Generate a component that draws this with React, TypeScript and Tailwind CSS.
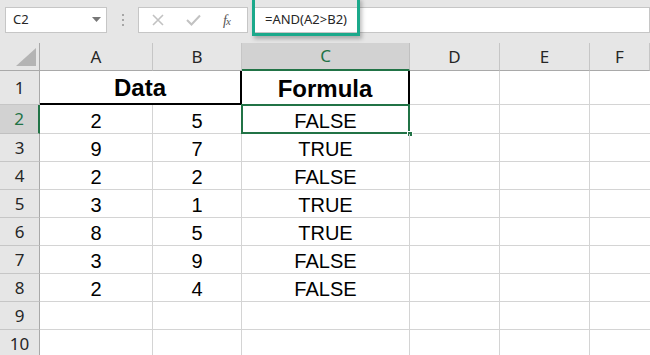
import React from 'react';

const rows = [
  { a: 2, b: 5, c: 'FALSE' },
  { a: 9, b: 7, c: 'TRUE' },
  { a: 2, b: 2, c: 'FALSE' },
  { a: 3, b: 1, c: 'TRUE' },
  { a: 8, b: 5, c: 'TRUE' },
  { a: 3, b: 9, c: 'FALSE' },
  { a: 2, b: 4, c: 'FALSE' },
];

const cols = ['A', 'B', 'C', 'D', 'E', 'F'];

const grid = 'grid grid-cols-[40px_113px_89px_168px_90px_90px_1fr]';
const cell = 'border-r border-b border-[#d4d4d4] flex items-center justify-center text-[20px] text-black pt-[3px]';
const ui = "font-['Noto_Sans',sans-serif]";

const App: React.FC = () => {
  return (
    <div className="w-[650px] h-[355px] overflow-hidden bg-white font-['Liberation_Sans',Arial,sans-serif]">
      <Toolbar />

      <div className={grid}>
        {/* column headers */}
        <div className="h-[28px] bg-[#e6e6e6] border-r border-b border-[#a9a9a9] flex items-end justify-end pr-[3px] pb-[4px]">
          <svg width="20" height="18" viewBox="0 0 20 18"><polygon points="20,0 20,18 0,18" fill="#b4b4b4" /></svg>
        </div>
        {cols.map((c) => (
          <div
            key={c}
            className={`h-[28px] flex items-center justify-center text-[17px] ${ui} border-r ${
              c === 'C'
                ? 'bg-[#d2d2d2] text-[#217346] border-r-[#c0c0c0] border-b-2 border-b-[#217346]'
                : 'bg-[#e6e6e6] text-[#262626] border-r-[#c6c6c6] border-b border-b-[#a9a9a9]'
            }`}
          >
            {c}
          </div>
        ))}

        {/* row 1 */}
        <RowHead n={1} h="h-[34px]" />
        <div className="col-span-2 h-[34px] border-r-2 border-b-2 border-black flex items-center justify-center text-[24px] font-bold pt-[2px]">
          Data
        </div>
        <div className="h-[34px] border-r-2 border-black flex items-center justify-center text-[24px] font-bold pt-[2px]">
          Formula
        </div>
        <div className={`${cell} h-[34px]`} />
        <div className={`${cell} h-[34px]`} />
        <div className={`${cell} h-[34px] border-r-0`} />

        {rows.map((r, i) => {
          const n = i + 2;
          const h = n === 2 ? 'h-[29px]' : 'h-[28px]';
          return (
            <React.Fragment key={n}>
              <RowHead n={n} h={h} selected={n === 2} />
              <div className={`${cell} ${h}`}>{r.a}</div>
              <div className={`${cell} ${h}`}>{r.b}</div>
              <div className={`${cell} ${h} relative`}>
                {r.c}
                {n === 2 && (
                  <>
                    <div className="absolute -top-px -left-px -right-px -bottom-px border-2 border-[#217346]" />
                    <div className="absolute -right-[4px] -bottom-[4px] w-[6px] h-[6px] bg-[#217346] border border-white" />
                  </>
                )}
              </div>
              <div className={`${cell} ${h}`} />
              <div className={`${cell} ${h}`} />
              <div className={`${cell} ${h} border-r-0`} />
            </React.Fragment>
          );
        })}

        {[9, 10].map((n) => (
          <React.Fragment key={n}>
            <RowHead n={n} h="h-[28px]" />
            {cols.map((c) => (
              <div key={c} className={`${cell} h-[28px] ${c === 'F' ? 'border-r-0' : ''}`} />
            ))}
          </React.Fragment>
        ))}
      </div>
    </div>
  );
};

const RowHead: React.FC<{ n: number; h: string; selected?: boolean }> = ({ n, h, selected }) => (
  <div
    className={`${h} flex items-center justify-center text-[17px] ${ui} border-b ${
      selected
        ? 'bg-[#d2d2d2] text-[#217346] border-r-2 border-r-[#217346] border-b-[#c0c0c0]'
        : 'bg-[#e6e6e6] text-[#262626] border-r border-r-[#a9a9a9] border-b-[#c6c6c6]'
    }`}
  >
    {n}
  </div>
);

const Toolbar: React.FC = () => (
  <div className={`h-[43px] bg-[#e6e6e6] relative flex items-start pt-[7px] pl-[5px] ${ui}`}>
    <div className="w-[102px] h-[26px] bg-white border border-[#c6c6c6] flex items-center justify-between pl-[7px] pr-[5px] text-[13px] text-[#262626]">
      <span>C2</span>
      <svg width="9" height="6" viewBox="0 0 9 6"><polygon points="0,0 9,0 4.5,5" fill="#777" /></svg>
    </div>
    <div className="w-[31px] h-[26px] flex flex-col items-center justify-center gap-[3px]">
      <span className="w-[2px] h-[2px] bg-[#a6a6a6]" />
      <span className="w-[2px] h-[2px] bg-[#a6a6a6]" />
      <span className="w-[2px] h-[2px] bg-[#a6a6a6]" />
    </div>
    <div className="w-[110px] h-[26px] bg-white border border-[#c6c6c6] flex items-center pl-[13px] gap-[22px]">
      <svg width="12" height="12" viewBox="0 0 12 12"><path d="M1 1 L11 11 M11 1 L1 11" stroke="#c2c2c2" strokeWidth="1.6" /></svg>
      <svg width="15" height="12" viewBox="0 0 15 12"><path d="M1 6 L5.5 10.5 L14 1.5" stroke="#c2c2c2" strokeWidth="2" fill="none" /></svg>
      <span className="text-[14px] italic text-[#555] font-['Liberation_Serif',serif] tracking-[-1px]">
        f<span className="text-[11px]">x</span>
      </span>
    </div>
    <div className="ml-[4px] flex-1 h-[26px] bg-white border border-[#c6c6c6] flex items-center pl-[12px] text-[13px] text-[#262626]">
      =AND(A2&gt;B2)
    </div>
    <div className="absolute left-[252px] top-[-3px] w-[108px] h-[39px] border-[3px] border-[#1ba98b] shadow-[2px_3px_4px_rgba(0,0,0,0.25)]" />
  </div>
);

export default App;
